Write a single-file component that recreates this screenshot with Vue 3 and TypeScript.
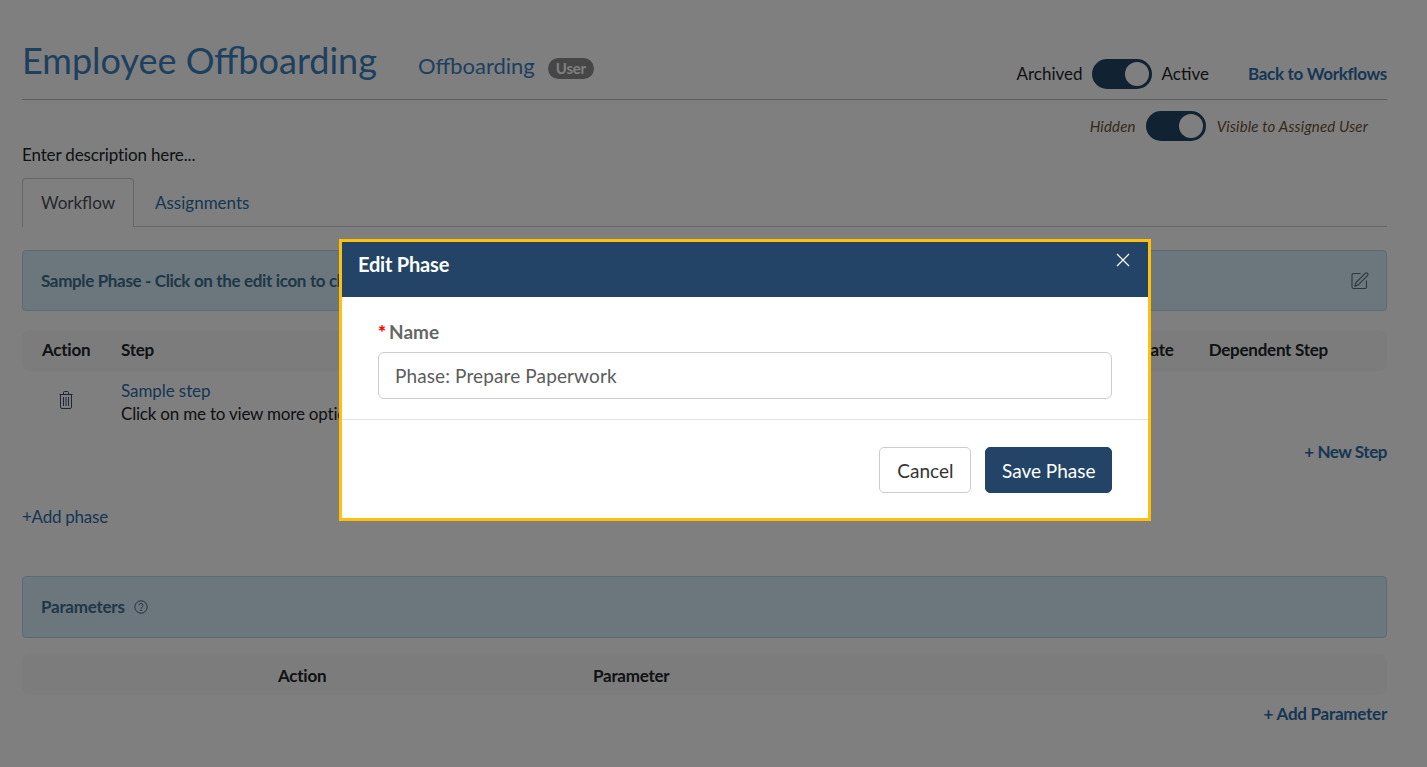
<script setup lang="ts">
const toggles = { status: true, visible: true }
</script>

<template>
  <div class="page">
    <header class="top">
      <h1 class="title">Employee Offboarding</h1>
      <span class="subtitle">Offboarding</span>
      <span class="badge">User</span>
      <div class="top-right">
        <span class="tog-label">Archived</span>
        <span class="toggle" :class="{ on: toggles.status }"><i></i></span>
        <span class="tog-label">Active</span>
        <a class="link back">Back to Workflows</a>
      </div>
    </header>

    <div class="visibility">
      <em>Hidden</em>
      <span class="toggle" :class="{ on: toggles.visible }"><i></i></span>
      <em>Visible to Assigned User</em>
    </div>

    <p class="desc">Enter description here...</p>

    <nav class="tabs">
      <span class="tab active">Workflow</span>
      <a class="tab">Assignments</a>
    </nav>

    <section class="panel phase">
      <strong>Sample Phase - Click on the edit icon to change the name of this phase</strong>
      <svg class="edit" viewBox="0 0 20 20" width="20" height="20" fill="none" stroke="currentColor" stroke-width="1.1">
        <path d="M10.5 2.5H3.5A1.5 1.5 0 0 0 2 4v12a1.5 1.5 0 0 0 1.5 1.5H15a1.5 1.5 0 0 0 1.5-1.5V9.5" />
        <path d="M6 11.5 15.2 2.3a1.6 1.6 0 0 1 2.3 2.3L8.3 13.8 5 15z" />
      </svg>
    </section>

    <div class="thead steps">
      <span>Action</span>
      <span>Step</span>
      <span>Due Date</span>
      <span>Dependent Step</span>
    </div>
    <div class="row">
      <svg class="trash" viewBox="0 0 14 18" width="14" height="18" fill="none" stroke="currentColor" stroke-width="1">
        <path d="M.5 3.5h13M4.5 3V1.5a1 1 0 0 1 1-1h3a1 1 0 0 1 1 1V3" />
        <path d="M1.5 3.5V16A1.5 1.5 0 0 0 3 17.5h8a1.5 1.5 0 0 0 1.5-1.5V3.5" />
        <path d="M4.5 6v9M7 6v9M9.5 6v9" />
      </svg>
      <div class="step-text">
        <a class="plain-link">Sample step</a>
        <div class="step-hint">Click on me to view more options for this step</div>
      </div>
    </div>
    <div class="right-link"><a class="link new-step">+ New Step</a></div>

    <a class="plain-link add-phase">+Add phase</a>

    <section class="panel params">
      <strong>Parameters</strong>
      <svg class="help" viewBox="0 0 14 14" width="14" height="14" fill="none" stroke="currentColor" stroke-width="0.8">
        <circle cx="7" cy="7" r="6.2" />
        <path d="M5 5.4a2 2 0 1 1 3.1 1.7c-.7.5-1.1.8-1.1 1.6" />
        <circle cx="7" cy="10.3" r=".4" />
      </svg>
    </section>

    <div class="thead param-head">
      <span>Action</span>
      <span>Parameter</span>
    </div>
    <div class="right-link param-link"><a class="link">+ Add Parameter</a></div>
  </div>

  <div class="overlay"></div>

  <div class="modal">
    <div class="modal-head">
      <span>Edit Phase</span>
      <svg class="close" viewBox="0 0 14 14" width="14" height="14" stroke="#fff" stroke-width="1.2">
        <path d="M1 1l12 12M13 1 1 13" />
      </svg>
    </div>
    <div class="modal-body">
      <label class="field-label"><b>*</b>Name</label>
      <input class="field" value="Phase: Prepare Paperwork" />
    </div>
    <div class="modal-foot">
      <button class="btn cancel">Cancel</button>
      <button class="btn save">Save Phase</button>
    </div>
  </div>
</template>

<style>
html,
body {
  background: #fff;
  overflow: hidden;
}
</style>

<style scoped>
.page {
  height: 767px;
  box-sizing: border-box;
  padding: 0 40px 0 22px;
  font-family: Lato, sans-serif;
  font-size: 17px;
  color: #212529;
}

.link,
.plain-link {
  color: #2c6da8;
}

.link,
strong,
.thead {
  font-weight: 700;
  letter-spacing: -0.25px;
}

.top {
  display: flex;
  align-items: baseline;
  height: 100px;
  box-sizing: border-box;
  padding-top: 38px;
  border-bottom: 1px solid #bbb;
}

.title {
  margin: 0;
  font-size: 36px;
  line-height: 44px;
  font-weight: 400;
  color: #3a80bd;
}

.subtitle {
  margin-left: 41px;
  font-size: 22px;
  color: #3a80bd;
}

.badge {
  margin-left: 13px;
  background: #8c8c8c;
  color: #fff;
  font-size: 15px;
  font-weight: 700;
  letter-spacing: -0.2px;
  padding: 2px 8px;
  border-radius: 11px;
  line-height: 17px;
}

.top-right {
  margin-left: auto;
  display: flex;
  align-items: center;
  align-self: center;
  margin-top: 10px;
}

.toggle {
  display: inline-block;
  width: 60px;
  height: 30px;
  box-sizing: border-box;
  margin: 0 10px 0 9px;
  border-radius: 15px;
  background: #234466;
  position: relative;
}

.toggle i {
  position: absolute;
  top: 3px;
  right: 3px;
  width: 24px;
  height: 24px;
  border-radius: 50%;
  background: #fff;
}

.back {
  margin-left: 39px;
  letter-spacing: -0.3px;
}

.visibility {
  display: flex;
  justify-content: flex-end;
  align-items: center;
  margin-top: 11px;
  padding-right: 19px;
  font-size: 15px;
  letter-spacing: 0.17px;
  color: #6b5238;
  height: 30px;
}

.visibility .toggle {
  margin: 0 11px 0 10px;
}

.desc {
  margin: 0;
  line-height: 20px;
  margin-top: 4px;
  letter-spacing: -0.14px;
}

.tabs {
  display: flex;
  margin-top: 13px;
  height: 49px;
  border-bottom: 1px solid #ccc;
  box-sizing: border-box;
}

.tab {
  padding: 0 18px;
  line-height: 50px;
  color: #2c6da8;
  margin-right: 3px;
}

.tab.active {
  color: #495057;
  line-height: 48px;
  background: #fff;
  border: 1px solid #ccc;
  border-bottom: 0;
  border-radius: 4px 4px 0 0;
  height: 49px;
  box-sizing: border-box;
}

.panel {
  display: flex;
  align-items: center;
  background: #d9edfb;
  border: 1px solid #b0dbe8;
  border-radius: 4px;
  color: #3f6f8c;
  padding: 0 18px;
  box-sizing: border-box;
}

.phase {
  height: 61px;
  margin-top: 23px;
  justify-content: space-between;
}

.phase strong {
  letter-spacing: -0.35px;
}

.params {
  height: 62px;
  margin-top: 49px;
}

.params strong {
  margin-top: -2px;
}

.edit {
  color: #5a6a7a;
  margin-right: -2px;
}

.help {
  margin-left: 9px;
  color: #234466;
}

.thead {
  display: grid;
  align-items: center;
  background: #f8f8f8;
  border-radius: 8px;
  height: 41px;
  margin-top: 19px;
}

.steps {
  grid-template-columns: 79px 1fr auto auto;
  padding: 0 59px 2px 20px;
  box-sizing: border-box;
}

.steps span:last-child {
  margin-left: 35px;
}

.param-head {
  grid-template-columns: 315px 1fr;
  padding: 1px 0 0 256px;
  box-sizing: border-box;
  margin-top: 16px;
}

.row {
  display: flex;
  padding: 8px 0 0 20px;
}

.trash {
  margin: 12px 0 0 17px;
  color: #3a5068;
}

.step-text {
  margin-left: 48px;
  line-height: 23px;
  letter-spacing: -0.08px;
}

.step-hint {
  letter-spacing: -0.2px;
}

.right-link {
  display: flex;
  justify-content: flex-end;
  margin-top: 16px;
}

.new-step {
  letter-spacing: -0.45px;
}

.add-phase {
  display: block;
  margin-top: 44px;
  letter-spacing: -0.25px;
}

.param-link {
  margin-top: 8px;
}

.overlay {
  position: fixed;
  inset: 0;
  background: rgba(0, 0, 0, 0.5);
}

.modal {
  position: fixed;
  left: 339px;
  top: 239px;
  width: 812px;
  box-sizing: border-box;
  border: 3px solid #ffc107;
  background: #fff;
  font-family: Lato, sans-serif;
}

.modal-head {
  display: flex;
  justify-content: space-between;
  height: 55px;
  background: #234466;
  color: #fff;
  font-size: 20px;
  font-weight: 700;
  letter-spacing: -0.2px;
  line-height: 44px;
  padding: 0 18px 0 16px;
}

.close {
  margin: 11px 0 0;
}

.modal-body {
  padding: 24px 36px 20px;
  border-bottom: 1px solid #e3e3e3;
}

.field-label {
  display: block;
  font-size: 19px;
  font-weight: 700;
  color: #666;
  line-height: 22px;
  margin-bottom: 9px;
}

.field-label b {
  color: #f00;
  margin-right: 3px;
}

.field {
  display: block;
  width: 100%;
  height: 47px;
  box-sizing: border-box;
  border: 1px solid #ccc;
  border-radius: 6px;
  padding: 0 16px;
  font: 19px Lato, sans-serif;
  letter-spacing: 0.12px;
  color: #5c5c5c;
}

.modal-foot {
  display: flex;
  justify-content: flex-end;
  gap: 14px;
  padding: 27px 36px 25px;
}

.btn {
  height: 46px;
  border-radius: 5px;
  font: 19px Lato, sans-serif;
  padding: 0 17px;
}

.cancel {
  background: #fff;
  border: 1px solid #ccc;
  color: #333;
}

.save {
  background: #234466;
  border: 1px solid #234466;
  color: #fff;
  padding: 0 15.5px;
}
</style>
